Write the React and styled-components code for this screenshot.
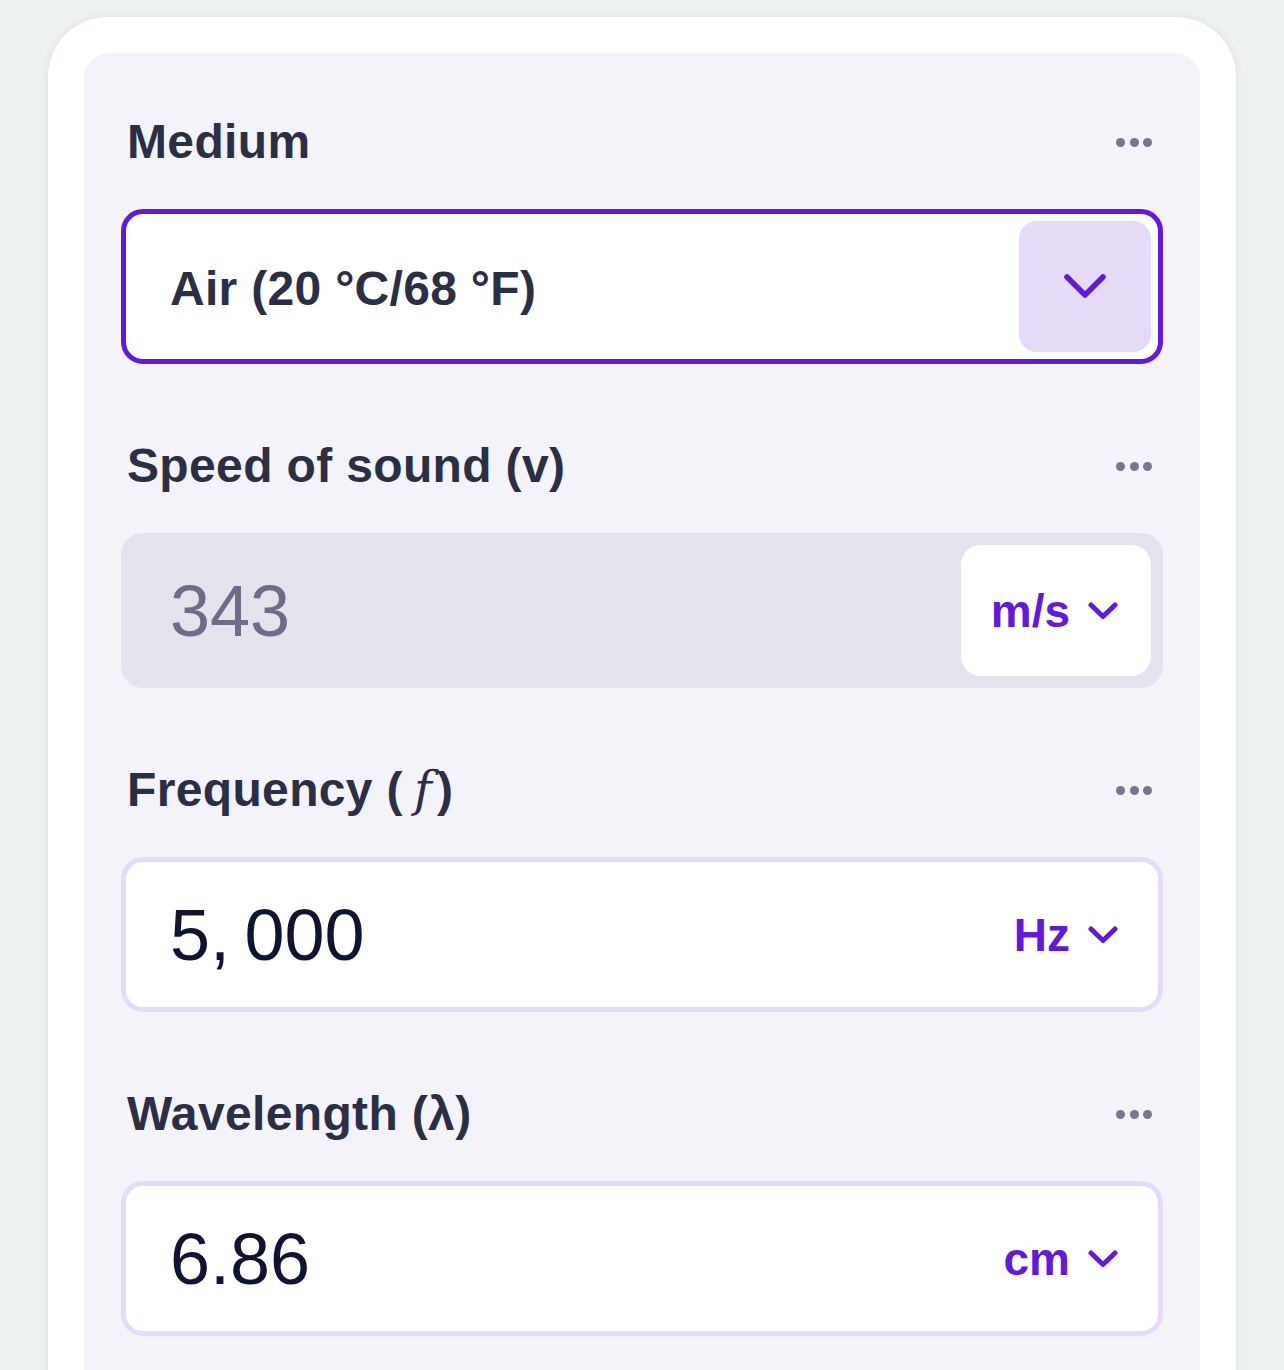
import React from 'react';
import styled, { createGlobalStyle, css } from 'styled-components';

const GlobalStyle = createGlobalStyle`
  body {
    margin: 0;
    background: #eef1f2;
    font-family: "Liberation Sans", Arial, sans-serif;
  }
`;

const Page = styled.div`
  padding: 17px 48px 0;
`;

const Card = styled.div`
  background: #ffffff;
  border-radius: 60px 60px 0 0;
  padding: 36px 36px 0;
  box-shadow: 0 0 8px rgba(40, 50, 60, 0.08);
`;

const Panel = styled.div`
  background: #f4f3f9;
  border-radius: 26px 26px 0 0;
  padding: 58px 37px 80px;
  display: flex;
  flex-direction: column;
  gap: 71px;
`;

const Section = styled.section`
  display: flex;
  flex-direction: column;
  gap: 38px;
`;

const LabelRow = styled.div`
  height: 60px;
  display: flex;
  align-items: center;
  justify-content: space-between;
  padding: 0 11px 0 6px;
`;

const Label = styled.h2`
  margin: 0;
  font-size: 48px;
  font-weight: 700;
  letter-spacing: 0.35px;
  color: #2b2f46;
`;

const MathVar = styled.span`
  font-family: "DejaVu Serif", "Liberation Serif", serif;
  font-style: italic;
  font-weight: 400;
  padding: 0 5px 0 11px;
`;

const Dots = styled.div`
  display: flex;
  gap: 4.5px;
  margin-top: 3px;
`;

const Dot = styled.span`
  width: 9px;
  height: 9px;
  border-radius: 50%;
  background: #777690;
`;

const fieldVariants = {
  select: css`
    border-color: #6318e0;
    background: #ffffff;
  `,
  disabled: css`
    border-color: #e3e3ed;
    background: #e3e3ed;
  `,
  input: css`
    border-color: #e4dbf9;
    background: #ffffff;
  `,
};

const Field = styled.div`
  box-sizing: border-box;
  height: 155px;
  border: 5px solid;
  border-radius: 22px;
  padding: 7px;
  display: flex;
  align-items: center;
  ${(p) => fieldVariants[p.$variant]}
`;

const Value = styled.div`
  flex: 1;
  padding-left: 37px;
  ${(p) =>
    p.$variant === 'select'
      ? css`
          font-size: 48px;
          font-weight: 700;
          letter-spacing: 0.3px;
          color: #2b2f46;
          padding-top: 4px;
        `
      : css`
          font-size: 72px;
          font-weight: 400;
          color: ${p.$variant === 'disabled' ? '#6e6c8a' : '#0f1430'};
        `}
`;

const SelectButton = styled.div`
  width: 132px;
  height: 100%;
  border-radius: 18px;
  background: #e5dbf9;
  display: flex;
  align-items: center;
  justify-content: center;
`;

const UnitButton = styled.div`
  height: 100%;
  display: flex;
  align-items: center;
  gap: 18px;
  padding: 0 33px 0 30px;
  border-radius: 20px;
  background: ${(p) => (p.$filled ? '#ffffff' : 'transparent')};
  font-size: 46px;
  font-weight: 700;
  color: #6318e0;
`;

const ChevronSmall = () => (
  <svg width="30" height="18" viewBox="0 0 30 18" fill="none">
    <path d="M3 3 L15 14.5 L27 3" stroke="#6318e0" strokeWidth="5" strokeLinecap="round" strokeLinejoin="round" />
  </svg>
);

const ChevronLarge = () => (
  <svg width="42" height="25" viewBox="0 0 42 25" fill="none">
    <path d="M3 3 L21 21 L39 3" stroke="#6318e0" strokeWidth="5.5" strokeLinecap="round" strokeLinejoin="round" />
  </svg>
);

const MoreDots = () => (
  <Dots>
    <Dot />
    <Dot />
    <Dot />
  </Dots>
);

const fields = [
  { label: 'Speed of sound (v)', value: '343', unit: 'm/s', variant: 'disabled' },
  { label: <>Frequency (<MathVar>f</MathVar>)</>, value: '5,\u2009000', unit: 'Hz', variant: 'input' },
  { label: 'Wavelength (λ)', value: '6.86', unit: 'cm', variant: 'input' },
];

export default function App() {
  return (
    <>
      <GlobalStyle />
      <Page>
        <Card>
          <Panel>
            <Section>
              <LabelRow>
                <Label>Medium</Label>
                <MoreDots />
              </LabelRow>
              <Field $variant="select">
                <Value $variant="select">Air (20 °C/68 °F)</Value>
                <SelectButton>
                  <ChevronLarge />
                </SelectButton>
              </Field>
            </Section>

            {fields.map((f, i) => (
              <Section key={i}>
                <LabelRow>
                  <Label>{f.label}</Label>
                  <MoreDots />
                </LabelRow>
                <Field $variant={f.variant}>
                  <Value $variant={f.variant}>{f.value}</Value>
                  <UnitButton $filled={f.variant === 'disabled'}>
                    {f.unit}
                    <ChevronSmall />
                  </UnitButton>
                </Field>
              </Section>
            ))}
          </Panel>
        </Card>
      </Page>
    </>
  );
}
